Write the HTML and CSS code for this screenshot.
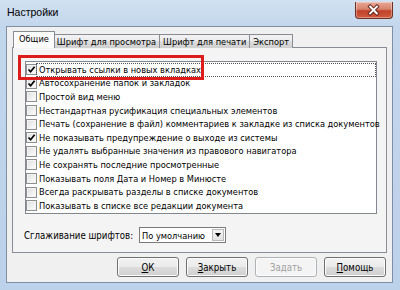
FILE: index.html
```html
<!DOCTYPE html>
<html lang="ru">
<head>
<meta charset="utf-8">
<title>Настройки</title>
<link rel="stylesheet" href="styles.css">
</head>
<body>
<div class="window">
  <div class="titlebar">
    <span class="title">Настройки</span>
    <div class="close">
      <svg width="38" height="16" viewBox="0 0 38 16">
        <path d="M15.5 4.5 L22.5 11.5 M22.5 4.5 L15.5 11.5" stroke="#5a1a10" stroke-width="3.8" stroke-linecap="square"/>
        <path d="M15.5 4.5 L22.5 11.5 M22.5 4.5 L15.5 11.5" stroke="#ffffff" stroke-width="2.1" stroke-linecap="square"/>
      </svg>
    </div>
  </div>
  <div class="client">
    <div class="tabs">
      <div class="tab active">Общие</div>
      <div class="tab">Шрифт для просмотра</div>
      <div class="tab">Шрифт для печати</div>
      <div class="tab">Экспорт</div>
    </div>
    <div class="panel">
      <div class="list">
        <div class="row"><span class="cb"><svg class="mark" width="9" height="9" viewBox="0 0 9 9"><path d="M1.5 4.5 L3.6 6.8 L7.6 1.8" fill="none" stroke="#000" stroke-width="1.7"/></svg></span><span class="text focus">Открывать ссылки в новых вкладках</span></div>
        <div class="row"><span class="cb"><svg class="mark" width="9" height="9" viewBox="0 0 9 9"><path d="M1.5 4.5 L3.6 6.8 L7.6 1.8" fill="none" stroke="#000" stroke-width="1.7"/></svg></span><span class="text">Автосохранение папок и закладок</span></div>
        <div class="row"><span class="cb"></span><span class="text">Простой вид меню</span></div>
        <div class="row"><span class="cb"></span><span class="text">Нестандартная русификация специальных элементов</span></div>
        <div class="row"><span class="cb"></span><span class="text">Печать (сохранение в файл) комментариев к закладке из списка документов</span></div>
        <div class="row"><span class="cb"><svg class="mark" width="9" height="9" viewBox="0 0 9 9"><path d="M1.5 4.5 L3.6 6.8 L7.6 1.8" fill="none" stroke="#000" stroke-width="1.7"/></svg></span><span class="text">Не показывать предупреждение о выходе из системы</span></div>
        <div class="row"><span class="cb"></span><span class="text">Не удалять выбранные значения из правового навигатора</span></div>
        <div class="row"><span class="cb"></span><span class="text">Не сохранять последние просмотренные</span></div>
        <div class="row"><span class="cb"></span><span class="text">Показывать поля Дата и Номер в Минюсте</span></div>
        <div class="row"><span class="cb"></span><span class="text">Всегда раскрывать разделы в списке документов</span></div>
        <div class="row"><span class="cb"></span><span class="text">Показывать в списке все редакции документа</span></div>
      </div>
      <div class="smooth">
        <span class="label">Сглаживание шрифтов:</span>
        <div class="combo"><span class="value">По умолчанию</span><span class="drop"><span class="tri"></span></span></div>
      </div>
    </div>
    <div class="buttons">
      <div class="btn"><u>О</u>К</div>
      <div class="btn"><u>З</u>акрыть</div>
      <div class="btn disabled">Задать</div>
      <div class="btn"><u>П</u>омощь</div>
    </div>
  </div>
  <div class="highlight"></div>
</div>
</body>
</html>
```

FILE: styles.css
```css
* { box-sizing: border-box; }
html, body { margin: 0; padding: 0; }
body {
  width: 400px;
  height: 290px;
  overflow: hidden;
  background: #ffffff;
  font-family: Tahoma, "DejaVu Sans Condensed", "Liberation Sans", sans-serif;
  font-size: 9.2px;
  color: #000;
}
.window {
  position: relative;
  width: 400px;
  height: 290px;
  background: linear-gradient(180deg, #d2e1f2 0px, #c2d6ec 26px, #bcd1ea 100%);
  display: flex;
  flex-direction: column;
}
.titlebar {
  height: 26px;
  display: flex;
  align-items: center;
  justify-content: space-between;
  padding: 0 7px 3px 7px;
}
.title {
  font-family: "Liberation Sans", Arial, sans-serif;
  font-size: 10.5px;
  color: #000;
}
.close {
  width: 38px;
  height: 17px;
  margin-top: -2px;
  border: 1px solid #6e2f24;
  border-top: none;
  border-radius: 0 0 4px 4px;
  background: linear-gradient(180deg, #e8a897 0%, #d7826c 45%, #c0432a 55%, #cf5a3d 100%);
  box-shadow: inset 0 0 0 1px rgba(255,255,255,0.35);
  display: flex;
}
.close svg { display: block; margin: 0 0 0 -1px; }
.client {
  margin-left: 6px;
  width: 387px;
  height: 257px;
  border: 1px solid #7f8ea3;
  background: #f0f0f0;
  padding-top: 4px;
  display: flex;
  flex-direction: column;
}
.tabs {
  display: flex;
  align-items: flex-end;
  height: 17px;
  margin-left: 8px;
  margin-bottom: -1px;
  position: relative;
  z-index: 1;
}
.tab {
  height: 14px;
  padding: 0 3px;
  border: 1px solid #898c95;
  border-bottom: none;
  margin-right: -1px;
  background: linear-gradient(180deg, #f2f2f2 0%, #ebebeb 50%, #dddddd 50%, #cfcfcf 100%);
  display: flex;
  align-items: center;
  line-height: 12px;
  white-space: nowrap;
}
.tab.active {
  height: 17px;
  margin-left: -2px;
  margin-right: -2px;
  padding: 1px 5px 0 5px;
  background: #fcfcfc;
  position: relative;
  z-index: 2;
  align-items: flex-start;
}
.panel {
  margin-left: 5px;
  width: 375px;
  height: 206px;
  border: 1px solid #898c95;
  background: #f4f4f4;
  padding: 13px 0 0 12px;
  display: flex;
  flex-direction: column;
}
.list {
  width: 352px;
  height: 153px;
  border: 1px solid #828790;
  background: #ffffff;
  padding-top: 1px;
}
.row {
  height: 13.6px;
  display: flex;
  align-items: center;
  white-space: nowrap;
}
.cb {
  width: 11px;
  height: 11px;
  flex: none;
  border: 1px solid #8e8f8f;
  background: linear-gradient(135deg, #dcdcdc 0%, #f2f2f2 60%, #ffffff 100%);
  box-shadow: inset 0 0 0 1px #f4f4f4;
  display: flex;
  align-items: center;
  justify-content: center;
}
.mark { display: block; }
.text {
  flex: 1;
  padding-left: 2px;
  line-height: 12px;
}
.text.focus {
  outline: 1px dotted #555;
  outline-offset: 0;
  margin-right: 1px;
}
.smooth {
  margin-top: 13px;
  margin-left: -1px;
  display: flex;
  align-items: center;
}
.label { width: 115px; flex: none; font-size: 9.6px; }
.combo {
  width: 87px;
  height: 16px;
  border: 1px solid #7a7a7a;
  background: #fff;
  display: flex;
  align-items: center;
  justify-content: space-between;
  padding-left: 2px;
}
.drop {
  width: 12px;
  height: 12px;
  margin-right: 1px;
  background: linear-gradient(180deg, #f4f4f4, #e2e2e2);
  border: 1px solid #b9b9b9;
  display: flex;
  align-items: center;
  justify-content: center;
}
.tri {
  width: 0;
  height: 0;
  border-left: 3.5px solid transparent;
  border-right: 3.5px solid transparent;
  border-top: 4px solid #000;
}
.buttons {
  margin-top: 4px;
  display: flex;
  justify-content: flex-end;
  gap: 7px;
  padding-right: 6px;
}
.btn {
  width: 62px;
  height: 20px;
  border: 1px solid #707070;
  border-radius: 3px;
  background: linear-gradient(180deg, #f2f2f2 0%, #ebebeb 50%, #dddddd 50%, #cfcfcf 100%);
  box-shadow: inset 0 0 0 1px #fcfcfc;
  display: flex;
  align-items: center;
  justify-content: center;
  font-size: 9.6px;
}
.btn u { text-decoration: underline; text-underline-offset: 1px; }
.btn.disabled {
  border-color: #adb2b5;
  background: #f4f4f4;
  color: #a0a0a0;
}
.highlight {
  position: absolute;
  left: 18px;
  top: 55px;
  width: 186px;
  height: 25px;
  border: 3px solid #dd1c1c;
}
```
